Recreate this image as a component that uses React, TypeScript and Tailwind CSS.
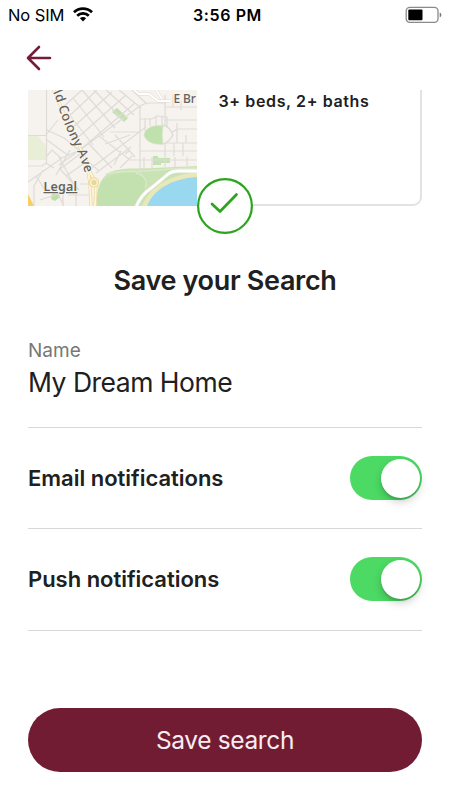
import React, { useState } from "react";

function StatusBar() {
  return (
    <div className="grid h-[30px] grid-cols-3 items-center pl-[8px] pr-[7px] text-black">
      <div className="flex items-center gap-[9px]">
        <span className="-mt-px whitespace-nowrap text-[16.5px] leading-[28px] tracking-[-0.1px]">No SIM</span>
        <svg className="-mt-[2px]" width="20" height="15" viewBox="0 0 20 15" fill="none" stroke="black" strokeWidth="2.7">
          <path d="M1 5.3C6 .4 14 .4 19 5.3" />
          <path d="M4.2 8.7c3.2-3.2 8.4-3.2 11.6 0" />
          <path d="M6.9 11.3a4.4 4.4 0 0 1 6.2 0L10 14.4z" fill="black" stroke="none" />
        </svg>
      </div>
      <span className="-mt-px whitespace-nowrap pl-[4px] text-center text-[16px] font-semibold leading-[28px] tracking-[0.6px]">3:56 PM</span>
      <svg className="-mt-px justify-self-end" width="38" height="18" viewBox="0 0 38 18">
        <rect x="1.2" y="1.3" width="31.8" height="15" rx="3.6" fill="white" stroke="#8a8a8a" strokeWidth="1.3" />
        <rect x="3.3" y="3.5" width="14.2" height="10.7" rx="1" fill="black" />
        <path d="M34.7 6.5c2.2.8 2.2 4 0 4.8z" fill="#777" />
      </svg>
    </div>
  );
}

function MapPreview() {
  return (
    <svg className="block shrink-0" width="169" height="116" viewBox="0 0 169 116" fill="none">
      <rect width="169" height="116" fill="#f6f2ed" />
      <path d="M0 46h10l8 10v14H0z" fill="#e9eed6" />
      <path d="M24 104l7-2 1 5-5 4-4-2z" fill="#b9dea6" />
      <path d="M84 22l5-4 11 10-4 4z" fill="#bfe2ac" />
      <path d="M125 66h5v2h12v5h-9v2h-8z" fill="#c3e2b1" />
      <path d="M69 116c-1-17 3-28 13-34 13-5 29-3 44-4l43-2v40z" fill="#c9e3b4" />
      <path d="M69 116c-1-15 3-25 12-29 10-5 21-5 28-3 9 3 11 10 8 15l-10 17z" fill="#c3e1ae" />
      <path d="M114 116c7-18 24-30 55-34v34z" fill="#e8e8b9" />
      <path d="M119 116c7-17 24-27 50-29v29z" fill="#99d8ef" />
      <path d="M0 104l6 12H0z" fill="#f7ce63" />
      <g stroke="#dfdbd8" strokeWidth="1.2">
        <path d="M18.5 0v74M0 45.5h18M0 76h14l4-3 8 5M0 92l17-12 17-12 20-9M6 116V96l9-16M8 86l9 14M18 67l6-7 9 8M19 40l17 8 16 13M19 50l22 16M30 30L18 45M30 65l15 28M42 60l-14 25M52 64L32 79l19 21M58 72L38 86M12 110l18-6 6 12M35 96v20M48 97v19M40 105h22M52 94h10" />
        <path d="M34 18L54 0M38 29L69 0M42 40L84 2M47 50L98 5M52 60L107 13" />
        <path d="M45 8l31 39M54 0l33 38M66 0l30 31M78 0l28 25M91 0l22 18M104 0l15 14M40 23l25 32" />
        <path d="M62 79L118 37M68 83l35-26M31 75l40-29 41-30c3-2 6-3 10-3h16M71 46l31 24h67M61 54l23 24M53 65l18 16M82 42h31M77 54l25-9M87 45l20 22M93 61l-7 14M97 64l5-4M104 66l-12 12M112 16v67M117 29v12M122 28v8M128 27v8M134 26v9M112 29h12l5-3 10 1v18M137 5v62M112 61h57M137 17h32M137 30h32M141 44l8-5h20M137 53h32M146 53v13M155 53v13M149 33v20M158 45v8M145 5v12M153 11v9M116 67v11M124 67v11M137 67v10M147 67v10M159 67v9" />
      </g>
      <path d="M106 0l5 4h10l9 7h12M128 0l6 9" stroke="#dedad6" strokeWidth="2.8" />
      <path d="M106 0l5 4h10l9 7h12M128 0l6 9" stroke="white" strokeWidth="1.8" />
      <path d="M134 35c7 1 9 6 11 10-3 5-6 9-12 9" fill="#f6f2ed" stroke="#dedad6" strokeWidth="1.3" />
      <path d="M135 36c-11-2-18 3-19 9 2 7 10 10 19 9l-1-9z" fill="#bfe1ab" stroke="#d6e3cb" strokeWidth=".8" />
      <path d="M78 84c12-3 26-3 38-3 18-1 32-3 53-3M108 83c8 2 12 7 9 15" stroke="#dbe8ce" strokeWidth="1.3" />
      <path d="M108 117c3-7 8-14 14-18l17-14c3-3 7-4 12-4h18" stroke="#dce2ca" strokeWidth="4" />
      <path d="M108 117c3-7 8-14 14-18l17-14c3-3 7-4 12-4h18" stroke="white" strokeWidth="2.8" />
      <path d="M25-2c6 13 11 28 20 45 6 13 13 24 15 38l2 12 1 23M61 80l7 14-1 22" stroke="#ead39a" strokeWidth="3.2" />
      <path d="M25-2c6 13 11 28 20 45 6 13 13 24 15 38l2 12 1 23M61 80l7 14-1 22" stroke="#fff5d1" strokeWidth="2" />
      <circle cx="66" cy="92.5" r="3.4" fill="#cde3b7" stroke="#e8cf8e" strokeWidth="3.2" />
      <circle cx="66" cy="92.5" r="3.4" stroke="#fff1c8" strokeWidth="1.8" />
      <path id="colony-avenue" d="M25 2C29 10 30 18 36 33c6 15 12 24 17 38l7 20" />
      <g fontFamily="Noto Sans, sans-serif" fill="#66615d" stroke="#f8f5ef" strokeWidth="1.8" paintOrder="stroke">
        <text fontSize="13" letterSpacing=".3" fontWeight="500">
          <textPath href="#colony-avenue" startOffset="0">ld Colony Ave</textPath>
        </text>
        <text x="145.5" y="13" fontSize="12" letterSpacing="-.1" fontWeight="500">E Br</text>
        <text x="15.5" y="101" fontSize="12.5" fontWeight="600" letterSpacing=".2" strokeWidth="1.2" textDecoration="underline">Legal</text>
      </g>
    </svg>
  );
}

function Toggle({ label }: { label: string }) {
  const [on, setOn] = useState(true);
  return (
    <button
      role="switch"
      aria-checked={on}
      aria-label={label}
      onClick={() => setOn(!on)}
      className={`flex h-[44px] w-[72px] items-center rounded-full px-[2px] ${on ? "justify-end bg-[#4cd964]" : "justify-start bg-gray-200"}`}
    >
      <span className="size-[39px] rounded-full bg-white shadow-[0_4px_9px_rgba(0,0,0,0.18),0_2px_2px_rgba(0,0,0,0.12)]" />
    </button>
  );
}

function NotificationRow({ label, spacing }: { label: string; spacing: string }) {
  return (
    <div className="flex h-[101.3px] items-center justify-between border-b-[1.5px] border-[#d8d8d8]">
      <span className={`whitespace-nowrap text-[22px] font-semibold text-[#202020] ${spacing}`}>{label}</span>
      <Toggle label={label} />
    </div>
  );
}

export default function App() {
  return (
    <main className="h-[800px] w-[450px] overflow-hidden bg-white font-['Inter',sans-serif] text-[#202020]">
      <StatusBar />
      <header className="flex h-[60px] items-start pl-[26px] pt-[15px]">
        <button aria-label="Back">
          <svg width="26" height="26" viewBox="0 0 26 26" fill="none" stroke="#741c38" strokeWidth="2.6" strokeLinecap="round" strokeLinejoin="round">
            <path d="M24 13H2M13 2L2 13l11 11" />
          </svg>
        </button>
      </header>
      <div className="px-[28px]">
        <section className="relative flex h-[116px] w-full rounded-br-[9px] border-b-2 border-r-2 border-[#e2e2e2]">
          <MapPreview />
          <p className="whitespace-nowrap pl-[21.5px] text-[16px] font-semibold leading-[22px] tracking-[0.62px]">3+ beds, 2+ baths</p>
          <svg className="absolute left-[169px] top-[88px]" width="56" height="56" viewBox="0 0 56 56" fill="none" stroke="#2ba51c">
            <circle cx="28" cy="28" r="26.9" fill="white" strokeWidth="2.2" />
            <path d="M15 26l8 7.5 16.5-17" strokeWidth="2.7" strokeLinecap="round" strokeLinejoin="round" />
          </svg>
        </section>
        <h1 className="mt-[57px] whitespace-nowrap text-center text-[27px] font-semibold leading-[36px] tracking-[-0.33px]">Save your Search</h1>
        <label className="mt-[39px] flex h-[90px] flex-col border-b-[1.5px] border-[#d8d8d8]">
          <span className="text-[19px] leading-[25px] text-[#777777]">Name</span>
          <input className="h-[38px] w-full text-[26.5px] leading-[38px] tracking-[-0.5px] outline-none" defaultValue="My Dream Home" />
        </label>
        <NotificationRow label="Email notifications" spacing="tracking-[-0.02px]" />
        <NotificationRow label="Push notifications" spacing="tracking-[-0.02px]" />
        <button className="mt-[77px] flex h-[64px] w-full items-center justify-center rounded-full bg-[#721c34] pt-[2px] text-[24.5px] tracking-[-0.35px] text-[#f7edf0]">
          Save search
        </button>
      </div>
    </main>
  );
}
